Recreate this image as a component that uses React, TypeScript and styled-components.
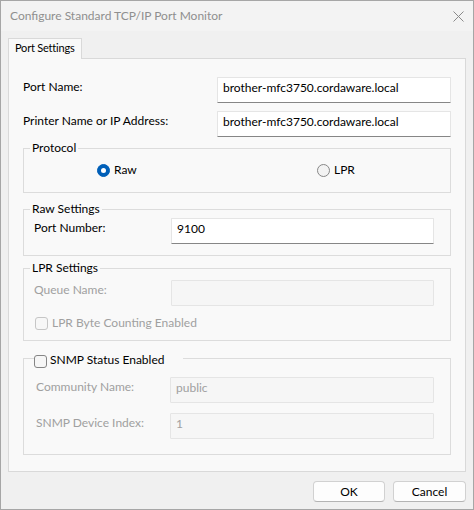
import styled, { createGlobalStyle } from 'styled-components'

const Global = createGlobalStyle`
  body {
    margin: 0;
    font-family: Lato, 'Liberation Sans', sans-serif;
    font-size: 12px;
    color: #000;
    background: #fff;
  }
`

const Window = styled.div`
  box-sizing: border-box;
  width: 474px;
  height: 510px;
  border: 1px solid #a6a6a6;
  background: #f0f0f0;
  display: flex;
  flex-direction: column;
`

const TitleBar = styled.div`
  height: 30px;
  flex-shrink: 0;
  display: flex;
  align-items: center;
  justify-content: space-between;
  padding: 0 9px 0 9px;
  background: #f3f3f3;
`

const Title = styled.span`
  color: #8f8f8f;
  line-height: 16px;
  margin-top: -1px;
`

const CloseIcon = styled.svg`
  display: block;
  margin-top: 1px;
`

const Body = styled.div`
  flex: 1;
  display: flex;
  flex-direction: column;
  padding: 7px 7px 7px;
`

const TabStrip = styled.div`
  display: flex;
`

const Tab = styled.div`
  position: relative;
  z-index: 1;
  box-sizing: border-box;
  width: 74px;
  height: 21px;
  margin-bottom: -1px;
  padding: 1px 0 0 6px;
  border: 1px solid #d9d9d9;
  border-bottom: none;
  background: #f9f9f9;
  font-size: 11px;
  letter-spacing: -0.2px;
  line-height: 16px;
  white-space: nowrap;
`

const Pane = styled.div`
  box-sizing: border-box;
  height: 414px;
  padding: 18px 14px 0;
  border: 1px solid #d9d9d9;
  background: #f9f9f9;
  display: flex;
  flex-direction: column;
`

const Row = styled.div<{ $gap?: number }>`
  display: flex;
  align-items: flex-start;
  margin-top: ${({ $gap }) => $gap ?? 0}px;
`

const Label = styled.span<{ $disabled?: boolean }>`
  flex: 1;
  padding-top: 2px;
  line-height: 16px;
  white-space: nowrap;
  color: ${({ $disabled }) => ($disabled ? '#a0a0a0' : '#000')};
`

const TextBox = styled.input<{ $width: number }>`
  box-sizing: border-box;
  width: ${({ $width }) => $width}px;
  height: 26px;
  margin: 0;
  padding: 1px 4px 7px 5px;
  border: 1px solid #e5e5e5;
  border-bottom-color: #868686;
  border-radius: 1px;
  background: #fff;
  font-family: inherit;
  font-size: 12px;
  line-height: 16px;
  color: #000;
  outline: none;

  &:disabled {
    border-bottom-color: #e5e5e5;
    background: #f6f6f6;
    color: #a0a0a0;
    -webkit-text-fill-color: #a0a0a0;
  }
`

const Group = styled.fieldset<{ $top: number }>`
  margin: ${({ $top }) => $top}px 0 0;
  padding: 0;
  border: 1px solid #dcdcdc;
  min-width: 0;
`

const GroupBody = styled.div<{ $pad: string }>`
  padding: ${({ $pad }) => $pad};
`

const Legend = styled.legend`
  margin-left: 6px;
  padding: 0 2px;
  line-height: 16px;
`

const CheckLegend = styled.legend`
  box-sizing: border-box;
  width: 149px;
  margin-left: 10px;
  padding: 3px 0 0;
  display: flex;
  align-items: flex-start;
  gap: 3px;
  line-height: 16px;
`

const RadioRow = styled.div`
  display: flex;
`

const RadioItem = styled.label<{ $width?: number }>`
  display: flex;
  align-items: center;
  gap: 4px;
  width: ${({ $width }) => ($width ? `${$width}px` : 'auto')};
  line-height: 16px;
`

const Radio = styled.span<{ $checked?: boolean }>`
  box-sizing: border-box;
  width: 13px;
  height: 13px;
  border-radius: 50%;
  display: flex;
  align-items: center;
  justify-content: center;
  border: 1px solid ${({ $checked }) => ($checked ? '#005fb8' : '#878787')};
  background: ${({ $checked }) => ($checked ? '#005fb8' : '#f3f3f3')};

  &::after {
    content: '';
    display: ${({ $checked }) => ($checked ? 'block' : 'none')};
    width: 5px;
    height: 5px;
    border-radius: 50%;
    background: #fff;
  }
`

const CheckRow = styled.label<{ $disabled?: boolean }>`
  display: flex;
  align-items: center;
  gap: 4px;
  margin: 9px 0 0 1px;
  line-height: 16px;
  color: ${({ $disabled }) => ($disabled ? '#a0a0a0' : '#000')};
`

const CheckBox = styled.span<{ $disabled?: boolean; $offset?: number }>`
  box-sizing: border-box;
  flex-shrink: 0;
  width: 13px;
  height: 13px;
  margin-top: ${({ $offset }) => $offset ?? 0}px;
  border: 1px solid ${({ $disabled }) => ($disabled ? '#c6c6c6' : '#858585')};
  border-radius: 3px;
  background: ${({ $disabled }) => ($disabled ? '#f7f7f7' : '#f6f6f6')};
`

const ButtonRow = styled.div`
  display: flex;
  justify-content: flex-end;
  gap: 8px;
  margin-top: 9px;
`

const Button = styled.button<{ $width: number }>`
  box-sizing: border-box;
  width: ${({ $width }) => $width}px;
  height: 21px;
  padding: 0;
  border: 1px solid #d1d1d1;
  border-bottom-color: #b4b4b4;
  border-radius: 4px;
  background: #fdfdfd;
  font-family: inherit;
  font-size: 12px;
  line-height: 16px;
  color: #000;
`

function App() {
  return (
    <>
      <Global />
      <Window>
        <TitleBar>
          <Title>Configure Standard TCP/IP Port Monitor</Title>
          <CloseIcon width="11" height="11" viewBox="0 0 11 11">
            <path d="M0.5 0.5 L10.5 10.5 M10.5 0.5 L0.5 10.5" stroke="#8a8a8a" strokeWidth="1" fill="none" />
          </CloseIcon>
        </TitleBar>
        <Body>
          <TabStrip>
            <Tab>Port Settings</Tab>
          </TabStrip>
          <Pane>
            <Row>
              <Label>Port Name:</Label>
              <TextBox $width={234} defaultValue="brother-mfc3750.cordaware.local" />
            </Row>
            <Row $gap={8}>
              <Label>Printer Name or IP Address:</Label>
              <TextBox $width={234} defaultValue="brother-mfc3750.cordaware.local" />
            </Row>

            <Group $top={3}>
              <Legend>Protocol</Legend>
              <GroupBody $pad="6px 0 14px 73px">
                <RadioRow>
                  <RadioItem $width={220}>
                    <Radio $checked />
                    Raw
                  </RadioItem>
                  <RadioItem>
                    <Radio />
                    LPR
                  </RadioItem>
                </RadioRow>
              </GroupBody>
            </Group>

            <Group $top={8}>
              <Legend>Raw Settings</Legend>
              <GroupBody $pad="1px 16px 11px 10px">
                <Row>
                  <Label>Port Number:</Label>
                  <TextBox $width={263} defaultValue="9100" />
                </Row>
              </GroupBody>
            </Group>

            <Group $top={4}>
              <Legend>LPR Settings</Legend>
              <GroupBody $pad="4px 16px 9px 10px">
                <Row>
                  <Label $disabled>Queue Name:</Label>
                  <TextBox $width={263} disabled defaultValue="" />
                </Row>
                <CheckRow $disabled>
                  <CheckBox $disabled />
                  LPR Byte Counting Enabled
                </CheckRow>
              </GroupBody>
            </Group>

            <Group $top={8}>
              <CheckLegend>
                <CheckBox $offset={3} />
                SNMP Status Enabled
              </CheckLegend>
              <GroupBody $pad="9px 16px 15px 12px">
                <Row>
                  <Label $disabled>Community Name:</Label>
                  <TextBox $width={264} disabled defaultValue="public" />
                </Row>
                <Row $gap={10}>
                  <Label $disabled>SNMP Device Index:</Label>
                  <TextBox $width={264} disabled defaultValue="1" />
                </Row>
              </GroupBody>
            </Group>
          </Pane>
          <ButtonRow>
            <Button $width={72}>OK</Button>
            <Button $width={73}>Cancel</Button>
          </ButtonRow>
        </Body>
      </Window>
    </>
  )
}

export default App
